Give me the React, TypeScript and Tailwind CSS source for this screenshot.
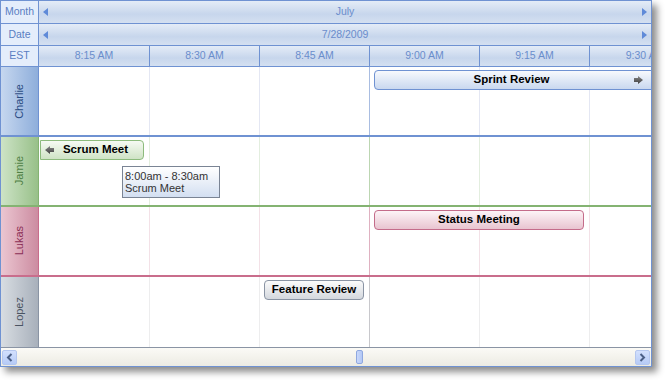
import React from 'react';

const times = ['8:15 AM', '8:30 AM', '8:45 AM', '9:00 AM', '9:15 AM', '9:30 AM'];
const cellW = ['w-[111px]', 'w-[110px]', 'w-[110px]', 'w-[110px]', 'w-[110px]', 'w-[110px]'];

const Arrow: React.FC<{ dir: 'left' | 'right' }> = ({ dir }) => (
    <svg width="9" height="8" viewBox="0 0 9 8" className="shrink-0">
        <defs>
            <linearGradient id={`ag-${dir}`} x1="0" y1="0" x2="0" y2="1">
                <stop offset="0" stopColor="#8a8a8a" />
                <stop offset="1" stopColor="#3d3d3d" />
            </linearGradient>
        </defs>
        {dir === 'right' ? (
            <polygon points="0,2 4,2 4,0 9,4 4,8 4,6 0,6" fill={`url(#ag-${dir})`} />
        ) : (
            <polygon points="9,2 5,2 5,0 0,4 5,8 5,6 9,6" fill={`url(#ag-${dir})`} />
        )}
    </svg>
);

const HeaderBar: React.FC<{ label: string; text: string; h: string }> = ({ label, text, h }) => (
    <div className={`flex ${h} border-b border-[#6f92d2]`}>
        <div className="w-[38px] shrink-0 border-r border-[#6f92d2] bg-[#e4edfb] text-[#5a7ec2] flex items-center justify-center">
            {label}
        </div>
        <div className="flex-1 flex items-center px-[4px] bg-[linear-gradient(to_bottom,#e4ecf7,#c7d6ec_60%,#d4e0f1)] text-[#6a8dcc]">
            <span className="w-0 h-0 border-y-[4px] border-y-transparent border-r-[5px] border-r-[#5f8ad8]" />
            <span className="flex-1 text-center">{text}</span>
            <span className="w-0 h-0 border-y-[4px] border-y-transparent border-l-[5px] border-l-[#5f8ad8]" />
        </div>
    </div>
);

interface RowProps {
    name: string;
    labelBg: string;
    labelText: string;
    rowBorder: string;
    light: string;
    dark: string;
    h?: string;
    children?: React.ReactNode;
}

const ResourceRow: React.FC<RowProps> = ({ name, labelBg, labelText, rowBorder, light, dark, h = 'h-[70px] border-b-2', children }) => (
    <div className={`flex ${h} ${rowBorder}`}>
        <div className={`w-[38px] shrink-0 border-r ${rowBorder} ${labelBg} flex items-center justify-center`}>
            <span className={`[writing-mode:vertical-rl] rotate-180 text-[11px] ${labelText}`}>{name}</span>
        </div>
        <div className="relative flex-1 flex overflow-hidden">
            {cellW.map((w, i) => (
                <div key={i} className={`${w} shrink-0 ${i < 5 ? 'border-r' : ''} ${i === 2 ? dark : light} h-full`} />
            ))}
            {children}
        </div>
    </div>
);

export default function App() {
    return (
        <div className="w-[668px] h-[383px] bg-white font-['Liberation_Sans',Arial,sans-serif] text-[10.5px]">
            <div className="w-[652px] h-[367px] border border-[#6f92d2] bg-white flex flex-col overflow-hidden shadow-[5px_5px_7px_rgba(0,0,0,0.45)]">
                <HeaderBar label="Month" text="July" h="h-[23px]" />
                <HeaderBar label="Date" text="7/28/2009" h="h-[22px]" />

                {/* time scale */}
                <div className="flex h-[21px] border-b border-[#6f92d2]">
                    <div className="w-[38px] shrink-0 border-r border-[#6f92d2] bg-[#e4edfb] text-[#5a7ec2] flex items-center justify-center">
                        EST
                    </div>
                    <div className="flex-1 flex overflow-hidden bg-[linear-gradient(to_bottom,#e4ecf7,#c7d6ec_60%,#d4e0f1)] text-[#6a8dcc]">
                        {times.map((t, i) => (
                            <div key={t} className={`${cellW[i]} shrink-0 ${i < 5 ? 'border-r border-[#6f92d2]' : ''} flex items-center justify-center whitespace-nowrap`}>
                                {t}
                            </div>
                        ))}
                    </div>
                </div>

                <ResourceRow
                    name="Charlie"
                    labelBg="bg-[linear-gradient(to_right,#c6d7ef,#8eaedb)]"
                    labelText="text-[#2a4c82]"
                    rowBorder="border-[#6f92d2]"
                    light="border-[#e4e7f3]"
                    dark="border-[#a9bde1]"
                >
                    <div className="absolute left-[335px] top-[3px] w-[280px] h-[20px] border border-[#6f92d2] rounded-l-[4px] bg-[linear-gradient(to_bottom,#f7f9fd,#c9d8ef)] flex items-center text-[11.5px] font-bold text-black">
                        <span className="flex-1 text-center pl-[14px]">Sprint Review</span>
                        <span className="mr-[10px]"><Arrow dir="right" /></span>
                    </div>
                </ResourceRow>

                <ResourceRow
                    name="Jamie"
                    labelBg="bg-[linear-gradient(to_right,#cde3c6,#98c089)]"
                    labelText="text-[#4f7f45]"
                    rowBorder="border-[#84b372]"
                    light="border-[#e3eedf]"
                    dark="border-[#bcd6b2]"
                >
                    <div className="absolute left-[1px] top-[3px] w-[104px] h-[20px] border border-[#8dbb7d] rounded-r-[4px] bg-[linear-gradient(to_bottom,#f6faf3,#cfe3c5)] flex items-center text-[11.5px] font-bold text-black">
                        <span className="ml-[4px]"><Arrow dir="left" /></span>
                        <span className="flex-1 text-center pr-[6px]">Scrum Meet</span>
                    </div>
                    <div className="absolute left-[83px] top-[29px] w-[98px] h-[32px] border border-[#7a8494] bg-[linear-gradient(to_bottom,#ffffff,#d3dff1)] text-[11px] leading-[12px] text-[#333] pl-[2px] pt-[3px]">
                        <div>8:00am - 8:30am</div>
                        <div>Scrum Meet</div>
                    </div>
                </ResourceRow>

                <ResourceRow
                    name="Lukas"
                    labelBg="bg-[linear-gradient(to_right,#ebc6d1,#cc8ca1)]"
                    labelText="text-[#8c2f56]"
                    rowBorder="border-[#c96d8c]"
                    light="border-[#f3e1e7]"
                    dark="border-[#dfb1c1]"
                >
                    <div className="absolute left-[335px] top-[3px] w-[210px] h-[20px] border border-[#c46c8a] rounded-[4px] bg-[linear-gradient(to_bottom,#fdf4f7,#e8c4d0)] flex items-center justify-center text-[11.5px] font-bold text-black">
                        Status Meeting
                    </div>
                </ResourceRow>

                <ResourceRow
                    name="Lopez"
                    labelBg="bg-[linear-gradient(to_right,#d8dde2,#a8b0bb)]"
                    labelText="text-[#4a5462]"
                    rowBorder="border-[#8a94a4]"
                    light="border-[#ededee]"
                    dark="border-[#c8c8cc]"
                    h="h-[71px] border-b"
                >
                    <div className="absolute left-[225px] top-[3px] w-[100px] h-[20px] border border-[#8a94a4] rounded-[4px] bg-[linear-gradient(to_bottom,#fbfbfb,#d4d8de)] flex items-center justify-center text-[11.5px] font-bold text-black">
                        Feature Review
                    </div>
                </ResourceRow>

                {/* horizontal scrollbar */}
                <div className="relative flex-1 flex items-center justify-between px-[1px] bg-[linear-gradient(to_bottom,#fbfaf6,#ecebe3)]">
                    <div className="w-[15px] h-[15px] rounded-[2px] border border-[#b5c7ef] bg-[linear-gradient(to_bottom,#d3e0fd,#b6cbf7)] flex items-center justify-center">
                        <svg width="7" height="9" viewBox="0 0 7 9">
                            <polyline points="5.5,1 2,4.5 5.5,8" fill="none" stroke="#4b5f86" strokeWidth="2" />
                        </svg>
                    </div>
                    <div className="absolute left-[355px] top-[2px] w-[7px] h-[14px] rounded-[2px] border border-[#8fa8e0] bg-[linear-gradient(to_right,#c9d8fb,#b3c8f5)]" />
                    <div className="w-[15px] h-[15px] rounded-[2px] border border-[#b5c7ef] bg-[linear-gradient(to_bottom,#d3e0fd,#b6cbf7)] flex items-center justify-center">
                        <svg width="7" height="9" viewBox="0 0 7 9">
                            <polyline points="1.5,1 5,4.5 1.5,8" fill="none" stroke="#4b5f86" strokeWidth="2" />
                        </svg>
                    </div>
                </div>
            </div>
        </div>
    );
}
